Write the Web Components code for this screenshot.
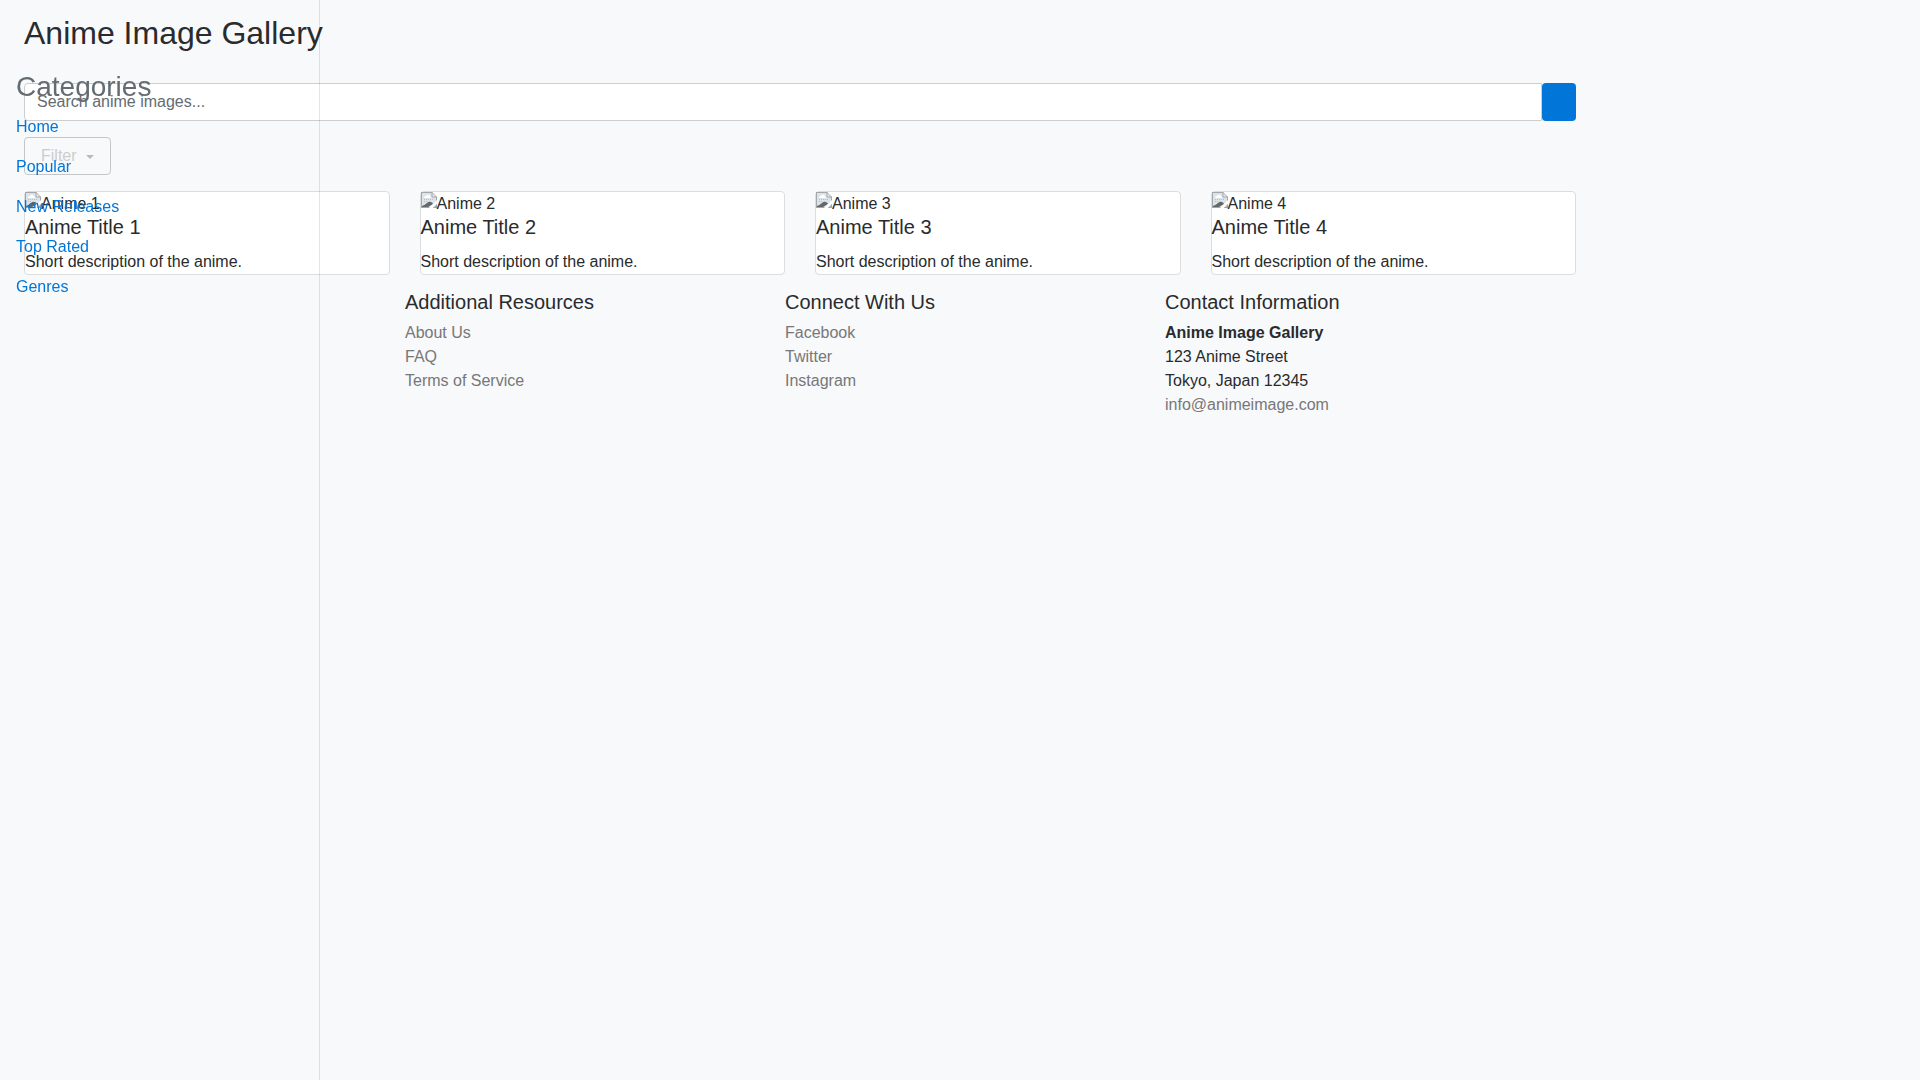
<!DOCTYPE html>
<html lang="en">
<head>
<meta charset="utf-8">
<title>Anime Image Gallery</title>
<style>
  body {
    margin: 0;
    background: #f8f9fb;
    color: #292b2c;
    font: 16px/24px "Liberation Sans", Arial, sans-serif;
  }
  main {
    box-sizing: border-box;
    width: calc(100% * 10 / 12);
    padding: 16px 24px;
  }
  h1 {
    margin: 0 0 32px;
    font-size: 32px;
    line-height: 35px;
    font-weight: 400;
  }
  .cards {
    display: grid;
    grid-template-columns: repeat(4, 1fr);
    gap: 30px;
    margin: 16px 0;
  }
  footer {
    display: grid;
    grid-template-columns: repeat(4, 1fr);
    padding: 0 31px 0 1px;
  }
  footer link-column:first-child {
    grid-column-start: 2;
  }
</style>
</head>
<body>
<main>
  <h1>Anime Image Gallery</h1>
  <search-bar></search-bar>
  <filter-button>Filter</filter-button>
  <div class="cards">
    <anime-card alt="Anime 1" heading="Anime Title 1">Short description of the anime.</anime-card>
    <anime-card alt="Anime 2" heading="Anime Title 2">Short description of the anime.</anime-card>
    <anime-card alt="Anime 3" heading="Anime Title 3">Short description of the anime.</anime-card>
    <anime-card alt="Anime 4" heading="Anime Title 4">Short description of the anime.</anime-card>
  </div>
  <footer>
    <link-column heading="Additional Resources">
      <a href="#about">About Us</a>
      <a href="#faq">FAQ</a>
      <a href="#terms">Terms of Service</a>
    </link-column>
    <link-column heading="Connect With Us">
      <a href="#facebook">Facebook</a>
      <a href="#twitter">Twitter</a>
      <a href="#instagram">Instagram</a>
    </link-column>
    <link-column heading="Contact Information">
      <strong>Anime Image Gallery</strong>
      <span>123 Anime Street</span>
      <span>Tokyo, Japan 12345</span>
      <a href="mailto:info@animeimage.com">info@animeimage.com</a>
    </link-column>
  </footer>
</main>
<side-nav>
  <a href="#home">Home</a>
  <a href="#popular">Popular</a>
  <a href="#new">New Releases</a>
  <a href="#top">Top Rated</a>
  <a href="#genres">Genres</a>
</side-nav>

<script>
class SearchBar extends HTMLElement {
  constructor() {
    super();
    this.attachShadow({ mode: "open" });
    this.shadowRoot.innerHTML = `
      <style>
        :host {
          display: block;
        }
        form {
          display: flex;
        }
        input {
          box-sizing: border-box;
          flex: 1;
          min-width: 0;
          height: 38px;
          margin: 0;
          padding: 6px 12px;
          border: 1px solid #ccced0;
          border-radius: 4px 0 0 4px;
          background: #fff;
          color: #464a4c;
          font: inherit;
        }
        input::placeholder {
          color: #636c72;
          opacity: 1;
        }
        button {
          width: 34px;
          padding: 0;
          border: none;
          border-radius: 4px;
          background: #0275d8;
          cursor: pointer;
        }
      </style>
      <form>
        <input type="text" placeholder="Search anime images..." aria-label="Search anime images">
        <button type="button" aria-label="Search"></button>
      </form>
    `;
  }
}

class FilterButton extends HTMLElement {
  constructor() {
    super();
    this.attachShadow({ mode: "open" });
    this.shadowRoot.innerHTML = `
      <style>
        :host {
          display: block;
          margin-top: 16px;
        }
        button {
          display: flex;
          align-items: center;
          gap: 9px;
          height: 38px;
          padding: 0 16px;
          border: 1px solid #c4c6c8;
          border-radius: 4px;
          background: transparent;
          color: #ccc;
          font: inherit;
          cursor: pointer;
        }
        i {
          margin-top: 2px;
          border: 4px solid transparent;
          border-top-color: #bbb;
          border-bottom: 0;
        }
      </style>
      <button type="button" aria-haspopup="true"><slot></slot><i></i></button>
    `;
  }
}

class AnimeCard extends HTMLElement {
  constructor() {
    super();
    this.attachShadow({ mode: "open" });
    this.shadowRoot.innerHTML = `
      <style>
        :host {
          display: block;
          border: 1px solid #dcdddf;
          border-radius: 4px;
          background: #fff;
        }
        .image {
          display: flex;
        }
        h2 {
          margin: 0 0 12px;
          font-size: 20px;
          line-height: 22px;
          font-weight: 400;
        }
        p {
          margin: 0;
        }
      </style>
      <div class="image">
        <svg width="16" height="16" viewBox="0 0 16 16" aria-hidden="true">
          <path d="M0 0h11l5 5v11H0z" fill="#a3a7aa"/>
          <path d="M1 1h10v4h4v10H1z" fill="#dce3e9"/>
          <path d="M3 6q0-2 2-2 1-2 3-1t2 3z" fill="#fff"/>
          <path d="M11 1v4h4z" fill="#eee"/>
          <path d="M11 0v5h5" fill="none" stroke="#a3a7aa"/>
          <path d="M3 7.500h10M3 9.500h4" stroke="#9cc5e9" stroke-dasharray="1 1"/>
          <path d="M1 15v-1q3-1 5-3t4-1 2 2l-5 3z" fill="#626967"/>
          <path d="M8 16l8-8v4l-4 4z" fill="#fff"/>
          <path d="M12 16l4-4v4z" fill="#a3a7aa"/>
        </svg>
        <span></span>
      </div>
      <h2></h2>
      <p><slot></slot></p>
    `;
  }

  connectedCallback() {
    this.shadowRoot.querySelector("span").textContent = this.getAttribute("alt");
    this.shadowRoot.querySelector("h2").textContent = this.getAttribute("heading");
  }
}

class LinkColumn extends HTMLElement {
  constructor() {
    super();
    this.attachShadow({ mode: "open" });
    this.shadowRoot.innerHTML = `
      <style>
        :host {
          display: flex;
          flex-direction: column;
          align-items: flex-start;
        }
        h2 {
          margin: 0 0 8px;
          font-size: 20px;
          line-height: 22px;
          font-weight: 400;
        }
        ::slotted(a) {
          color: #777;
          text-decoration: none;
        }
      </style>
      <h2></h2>
      <slot></slot>
    `;
  }

  connectedCallback() {
    this.shadowRoot.querySelector("h2").textContent = this.getAttribute("heading");
  }
}

class SideNav extends HTMLElement {
  constructor() {
    super();
    this.attachShadow({ mode: "open" });
    // The panel has no background, so the page shows through it
    this.shadowRoot.innerHTML = `
      <style>
        :host {
          position: fixed;
          top: 0;
          bottom: 0;
          left: 0;
          box-sizing: border-box;
          width: calc(100% * 2 / 12);
          padding: 71px 16px 0;
          border-right: 1px solid rgba(0, 0, 0, 0.1);
        }
        h2 {
          margin: 0 0 12px;
          color: #636c72;
          font-size: 28px;
          line-height: 32px;
          font-weight: 400;
        }
        nav {
          display: flex;
          flex-direction: column;
          align-items: flex-start;
          gap: 16px;
        }
        ::slotted(a) {
          color: #0275d8;
          text-decoration: none;
        }
      </style>
      <h2>Categories</h2>
      <nav><slot></slot></nav>
    `;
  }
}

customElements.define("search-bar", SearchBar);
customElements.define("filter-button", FilterButton);
customElements.define("anime-card", AnimeCard);
customElements.define("link-column", LinkColumn);
customElements.define("side-nav", SideNav);
</script>
</body>
</html>
